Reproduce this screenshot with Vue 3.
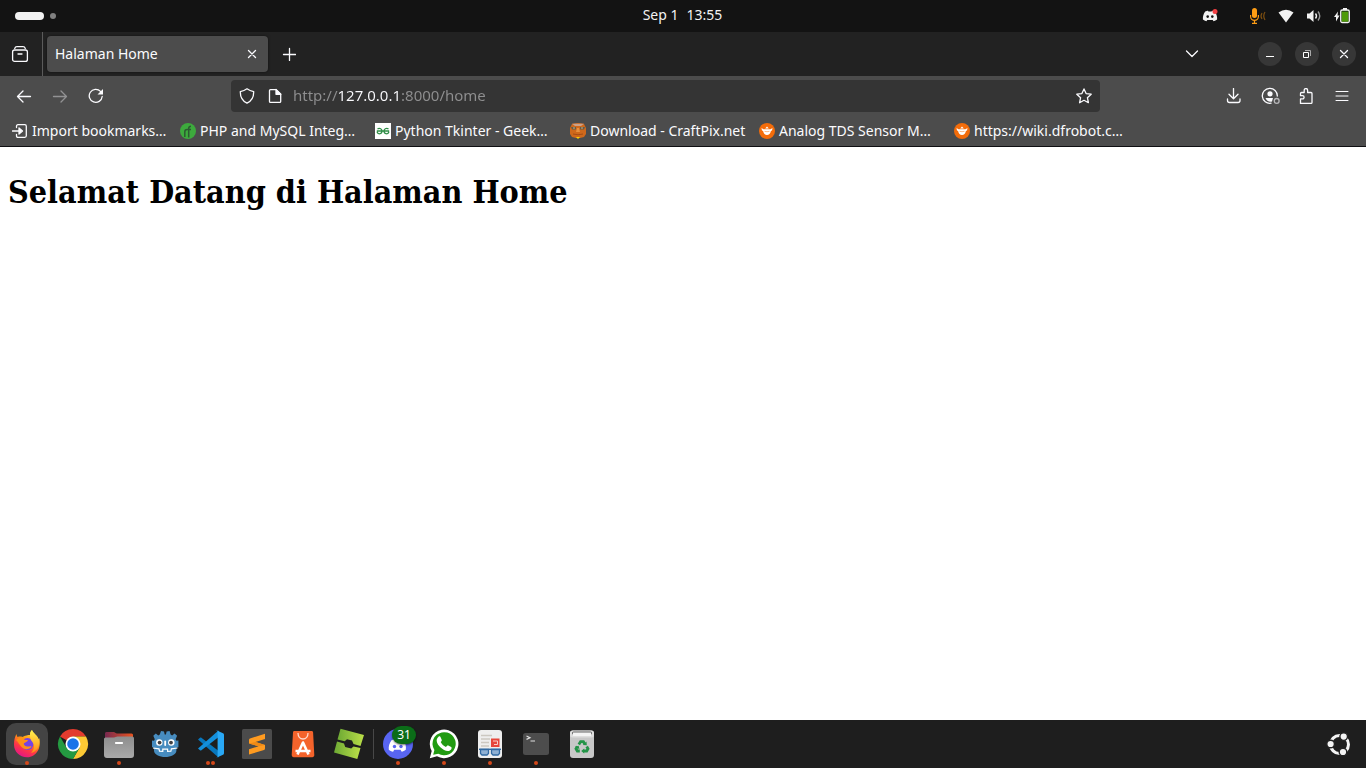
<script setup>
import { ref } from 'vue'

const address = ref('http://127.0.0.1:8000/home')

const bookmarks = [
  { id: 'import', label: 'Import bookmarks…', size: 'small' },
  { id: 'php', label: 'PHP and MySQL Integ…', size: 'large' },
  { id: 'geeks', label: 'Python Tkinter - Geek…', size: 'large' },
  { id: 'craftpix', label: 'Download - CraftPix.net', size: 'medium' },
  { id: 'dfrobot', label: 'Analog TDS Sensor M…', size: 'large' },
  { id: 'dfrobot', label: 'https://wiki.dfrobot.c…', size: 'large' }
]
</script>

<template>
  <div class="desktop">
    <header class="topbar">
      <button class="workspaces" aria-label="Activities"><span class="pill"></span><span class="dot"></span></button>
      <button class="clock"><span>Sep 1</span><span>13:55</span></button>
      <div class="status">
        <svg class="discord-tray" width="16" height="16" viewBox="0 0 16 16">
          <path d="M3.2 3.6C4.300 3 5.300 2.900 6 2.800l.4.8h3.200l.4-.8c.8.1 1.800.3 2.800.8 1.800 2.600 2.600 5.500 2.300 8-1 .9-2.200 1.400-3.500 1.700l-.9-1.300H5.300l-.9 1.300C3 13 1.900 12.500.9 11.600.7 8.700 1.500 6 3.200 3.600z" fill="#f2f2f2"/>
          <circle cx="5.700" cy="8.600" r="1.300" fill="#131313"/><circle cx="10.300" cy="8.600" r="1.300" fill="#131313"/>
          <circle cx="13" cy="3.500" r="2.500" fill="#f23f43"/>
        </svg>
        <svg width="16" height="16" viewBox="0 0 16 16" fill="none">
          <rect x="2" y="0" width="5" height="10" rx="2.500" fill="#ff9d14"/>
          <path d="M.6 7v1.500a3.900 3.900 0 0 0 7.800 0V7M4.500 12.500V15M2 15.300h5" stroke="#ff9d14" stroke-width="1.200"/>
          <path d="M12 5q-2 3 0 6M15 4q-2.500 4 0 8" stroke="#7d4f11" stroke-width="1.200"/>
        </svg>
        <svg width="16" height="16" viewBox="0 0 16 16"><path d="M.5 4.500Q8-1 15.500 4.500L8 14.500z" fill="#f2f2f2"/></svg>
        <svg width="16" height="16" viewBox="0 0 16 16" fill="none">
          <path d="M1 5.500h2.500L7.500 2v12l-4-3.500H1z" fill="#f2f2f2"/>
          <path d="M9.500 5.500q2 2.500 0 5" stroke="#f2f2f2" stroke-width="1.400"/><path d="M12 3.500q3.500 4.500 0 9" stroke="#999" stroke-width="1.400"/>
        </svg>
        <svg width="16" height="16" viewBox="0 0 16 16">
          <path d="M4 3.500 0 9h2v4.500L5.500 7.500h-2z" fill="#f2f2f2"/>
          <path d="M9 0h4v2H9z" fill="#f2f2f2"/><rect x="6.700" y="2" width="8.600" height="12.500" rx="1.500" fill="#2b4d10" stroke="#f2f2f2" stroke-width="1.300"/><rect x="8" y="4" width="6" height="9.500" fill="#4e9a06"/>
        </svg>
      </div>
    </header>

    <div class="tabs">
      <button class="view" aria-label="Recent browsing">
        <svg class="line" width="20" height="20" viewBox="0 0 20 20"><path d="M4.700 4.500C5.200 3 6 2.600 7 2.600h6c1 0 1.800.4 2.300 1.900M8 10h4"/><rect x="2.600" y="6" width="14.800" height="11.400" rx="2"/></svg>
      </button>
      <div class="tab">
        <span>Halaman Home</span>
        <button class="close" aria-label="Close tab"><svg class="line" width="10" height="10" viewBox="0 0 10 10"><path d="m1.500 1.500 7 7m0-7-7 7"/></svg></button>
      </div>
      <button class="new-tab" aria-label="New tab"><svg class="line" width="14" height="14" viewBox="0 0 14 14"><path d="M7.500 1.500v12M1.500 7.500h12"/></svg></button>
      <button class="list-tabs" aria-label="List all tabs"><svg class="line" width="14" height="14" viewBox="0 0 14 14"><path d="m1.500 4 5.500 5.500L12.500 4"/></svg></button>
      <div class="window-buttons">
        <button aria-label="Minimize"><svg width="12" height="12" viewBox="0 0 12 12"><path d="M2 8h8v1H2z" fill="#fff"/></svg></button>
        <button aria-label="Restore"><svg width="12" height="12" viewBox="0 0 12 12" fill="none"><path d="M4 2.500h5.500V8" stroke="#aaa"/><path d="M2.500 4.500h5v5h-5z" stroke="#fff"/></svg></button>
        <button aria-label="Close"><svg class="line" width="12" height="12" viewBox="0 0 12 12"><path d="m2.500 2.500 7 7m0-7-7 7"/></svg></button>
      </div>
    </div>

    <nav class="navbar">
      <button aria-label="Back"><svg class="line" width="16" height="16" viewBox="0 0 16 16"><path d="M14.500 8.500H1.500M7 3 1.500 8.500 7 14"/></svg></button>
      <button aria-label="Forward" disabled><svg class="line" width="16" height="16" viewBox="0 0 16 16"><path d="M1.500 8.500h13M9 3l5.500 5.500L9 14"/></svg></button>
      <button aria-label="Reload"><svg class="line" width="16" height="16" viewBox="0 0 16 16"><path d="M14.200 8.500A6.500 6.500 0 1 1 12.500 3.400"/><path d="M15 1v5.500H9.500z" fill="#fbfbfe" stroke="none"/></svg></button>
      <div class="urlbar">
        <svg class="line" width="16" height="16" viewBox="0 0 16 16"><path d="M8 .8c2 1.500 4 2.300 6.700 2.800.1 5-1.700 9.200-6.700 11.600C3 12.800 1.200 8.600 1.300 3.600 4 3.100 6 2.300 8 .8z"/></svg>
        <svg class="line" width="16" height="16" viewBox="0 0 16 16"><path d="M3.500 1.600H9l4.700 4.600v7.200c0 .7-.4 1-1 1H3.500c-.7 0-1-.4-1-1V2.600c0-.6.3-1 1-1z"/><path d="M9 1.500v4.800h4.800z" fill="#fbfbfe"/></svg>
        <input v-model="address" aria-label="Address" spellcheck="false" />
        <button aria-label="Bookmark this page"><svg class="line" width="16" height="16" viewBox="0 0 16 16"><path d="m8 .9 2.100 4.700 5.100.6-3.800 3.500 1 5L8 12.300l-4.400 2.400 1-5L.8 6.200l5.100-.6z"/></svg></button>
      </div>
      <button aria-label="Downloads"><svg class="line" width="16" height="16" viewBox="0 0 16 16"><path d="M7.500.5v10M3 6.200l4.500 4.500L12 6.200M1.500 11v1.500c0 1.300.8 2 2 2h8.500c1.200 0 2-.7 2-2V11"/></svg></button>
      <button aria-label="Account">
        <svg class="line" width="20" height="20" viewBox="0 0 20 20"><path d="M17.300 10A7.500 7.500 0 1 0 11 17.200"/><circle cx="10" cy="7.800" r="2.600" fill="#fbfbfe" stroke="none"/><path d="M5.500 12h7.500l-1 3.500c-3 .7-5.500-.7-6.500-3.500z" fill="#fbfbfe" stroke="none"/><circle cx="16.700" cy="14.900" r="2.400" stroke="#b7b7b9"/></svg>
      </button>
      <button aria-label="Extensions"><svg class="line" width="16" height="16" viewBox="0 0 16 16"><path d="M2.500 15.400v-4.500h2a1.500 1.500 0 0 0 0-3.200h-2V5.500c0-.6.400-1 1-1h2.700V2.200a1.700 1.700 0 0 1 3.400 0v2.300H13c.6 0 1 .4 1 1v8.900c0 .6-.4 1-1 1z"/></svg></button>
      <button aria-label="Menu"><svg class="line thin" width="16" height="16" viewBox="0 0 16 16"><path d="M2 3.500h12M2 8h12M2 12.500h12"/></svg></button>
    </nav>

    <div class="bookmarks">
      <a v-for="(b, i) in bookmarks" :key="i" href="#" :class="b.size">
        <svg width="16" height="16" viewBox="0 0 16 16">
          <g v-if="b.id === 'import'" class="line"><path d="M4.500 4.500V3.200c0-.9.500-1.500 1.500-1.500h6.800c1 0 1.500.6 1.500 1.500v9.600c0 1-.5 1.500-1.500 1.500H6c-1 0-1.500-.5-1.500-1.500v-1.300M.5 8h8"/><path d="m7 5 3.500 3L7 11z" fill="#fbfbfe"/></g>
          <g v-else-if="b.id === 'php'"><circle cx="8" cy="8" r="8" fill="#3daa3d"/><path d="M4.800 14V9c0-1.500.8-2.500 2.200-2.500M6.500 6.500h4.500M8.700 14.500V5.500c0-1.500.8-2.200 2.300-2.200" fill="none" stroke="#2d5a32" stroke-width="1.500"/></g>
          <g v-else-if="b.id === 'geeks'"><path d="M0 0h16v16H0z" fill="#fff"/><path d="M1.800 8h12.400M2.500 5.800C5 4.800 7 6 7 8c0 3-4 4-5 .8M13.500 5.800C11 4.800 9 6 9 8c0 3 4 4 5 .8" fill="none" stroke="#2f8d46" stroke-width="1.300"/></g>
          <g v-else-if="b.id === 'craftpix'"><path d="M2 1q6-2 12 0l2 4v6l-2 3-4 1H6l-4-1-2-3V5z" fill="#cf681b"/><path d="M2 .8h12L11 3H5z" fill="#c9a18a"/><path d="M1 4h5v2.500H2zm9 0h5l-1 2.500h-4z" fill="#625b4c"/><path d="M3 5h2m6 0h2" stroke="#c9b37c"/><path d="M7 5h2l1 4H6z" fill="#e8903e"/><path d="M3 11q5 1.500 10 0" fill="none" stroke="#a44c14"/><path d="m6 14 2 2 2-2z" fill="#ffd000"/></g>
          <g v-else><circle cx="8" cy="8" r="8" fill="#f36c0a"/><path d="M4.500 6.200h7l2-1.200-.4 2.300-1.300 1c-.3 2.200-1.800 3.700-3.800 3.700s-3.500-1.500-3.800-3.700l-1.300-1L2.500 5zM6.200 5.500 8 3.500l1.800 2z" fill="#fff"/><path d="M5.500 8.300q2.500.8 5 0" fill="none" stroke="#f7a468" stroke-width=".8"/></g>
        </svg>
        <span>{{ b.label }}</span>
      </a>
    </div>

    <main class="page"><h1>Selamat Datang di Halaman Home</h1></main>

    <footer class="dock">
      <button class="active running" aria-label="Firefox">
        <svg width="32" height="32" viewBox="0 0 32 32">
          <defs>
            <linearGradient id="fx" x1=".8" y1="0" x2=".3" y2="1"><stop offset="0" stop-color="#fff44f"/><stop offset=".4" stop-color="#ff980e"/><stop offset=".7" stop-color="#ff3647"/><stop offset="1" stop-color="#e31587"/></linearGradient>
            <linearGradient id="fy" x1=".5" y1="0" x2=".5" y2="1"><stop offset="0" stop-color="#fff44f"/><stop offset="1" stop-color="#ff8a16"/></linearGradient>
          </defs>
          <path d="M5.500 6c.2 1.500.6 2.200 1.200 3 1.600-.6 3.400-.6 4.800 0C14 7.500 17 7 19 7c0-2.300.8-4 2-5 .5 3 5.500 5 6.500 9l.8-.8C30.500 19 26 29.200 16 29.200 8.500 29.200 3 23.800 3 16.500 3 12 4 8.500 5.500 6z" fill="url(#fx)"/>
          <circle cx="16.500" cy="16" r="6" fill="#7542e5"/>
          <path d="M19 7c0-2.300.8-4 2-5 .5 3 6 5 7 11 .8 6-3 11-8 12 3-3 4-7 2-10-1-2-3-3-3-8z" fill="url(#fy)"/>
          <path d="M5 12c3-3 7-3 8.500-.2 1.500.5 3 .2 3.500.5-.3 1.500-3 2.200-4 3-.7 1 .4 2.800 3 3.200 1.800.3 3-.8 4.500 0-1.500 2.500-5 3.600-8 2C8.500 18 8 14.500 5 12z" fill="#ff8f18"/>
        </svg>
      </button>
      <button aria-label="Chrome">
        <svg width="32" height="32" viewBox="0 0 32 32"><path d="M16 16 3 8.500A15 15 0 0 1 29 8.500H16z" fill="#e33b2e"/><path d="M29 8.500A15 15 0 0 1 16 31l6.500-11.200L16 8.500z" fill="#fcc934"/><path d="M3 8.500A15 15 0 0 0 16 31l6.500-11.300L16 23l-6.500-3.300z" fill="#249a41"/><circle cx="16" cy="16" r="7.500" fill="#fff"/><circle cx="16" cy="16" r="5.800" fill="#1a73e8"/></svg>
      </button>
      <button class="running" aria-label="Files">
        <svg width="32" height="32" viewBox="0 0 32 32"><defs><linearGradient id="fo"><stop stop-color="#77284f"/><stop offset="1" stop-color="#e95420"/></linearGradient><linearGradient id="fg" x2="0" y2="1"><stop stop-color="#8d8d8d"/><stop offset="1" stop-color="#aaa"/></linearGradient></defs><path d="M2 12V5.500C2 4.500 2.800 4 3.500 4h7c1.500 0 2 1.500 3.500 1.500h14.500c1 0 1.500.8 1.500 1.500v5z" fill="url(#fo)"/><path d="M3 9.500h8c1.500 0 2-1 3.500-1H29c1.300 0 2 .8 2 2V27a3 3 0 0 1-3 3H4a3 3 0 0 1-3-3V11c0-1 1-1.500 2-1.500z" fill="url(#fg)"/><rect x="12" y="14" width="8" height="2" rx=".7" fill="#fff"/></svg>
      </button>
      <button aria-label="Godot">
        <svg width="32" height="32" viewBox="0 0 32 32"><path d="m12 3 3 .5.700 3h1.200l.7-3 3-.5 1 3.600 1.500.8 2.500-2 2.500 2.300-1.500 3.500.8 1.500 2-.2v6.800l-2 .2v3c0 4-5.500 6.500-11.200 6.500S5 26.500 5 22.500v-3l-2-.2v-6.800l2 .2.800-1.500L4.300 7.700l2.500-2.300 2.500 2 1.500-.8z" fill="#478cbf"/><path d="m4 20 6 .8.500 2.300 3.300.2v-2.200h4.800v2.200l3.300-.2.500-2.300 6-.8" fill="none" stroke="#fff" stroke-width="1.200"/><circle cx="10.300" cy="14.500" r="3.200" fill="#fff"/><circle cx="22.300" cy="14.500" r="3.200" fill="#fff"/><circle cx="10.600" cy="14.600" r="1.900" fill="#414042"/><circle cx="22" cy="14.600" r="1.900" fill="#414042"/><path d="M16.200 13.500v3.500" stroke="#fff" stroke-width="1.800" stroke-linecap="round"/></svg>
      </button>
      <button class="running two" aria-label="Visual Studio Code">
        <svg width="32" height="32" viewBox="0 0 32 32"><path d="M3 11.500 5 9.700c.5-.4 1-.3 1.400 0L25 24l-1.500 5.500z" fill="#0877bd"/><path d="m3 20.500 2 1.800c.5.400 1 .3 1.400 0L25 8l-1.500-5.500z" fill="#138fdb"/><path d="m22.500 2.700 5.500 2.600c.6.300 1 .8 1 1.500v18.400c0 .7-.4 1.200-1 1.500l-5.500 2.600c-.6.300-1.200.1-1.600-.3.800.6 1.700.2 1.700-.8V3.800c0-1-1-1.400-1.700-.8.400-.4 1-.6 1.600-.3z" fill="#29a8f5"/></svg>
      </button>
      <button aria-label="Sublime Text">
        <svg width="32" height="32" viewBox="0 0 32 32"><rect x="1" y="1" width="30" height="30" rx="1.500" fill="#4b4b4b"/><path d="M24 5.700V11l-9.500 3L24 17v3.500c0 .8-.4 1.300-1 1.500L8 26.500v-5.200L17.500 18.200 8 15.500V12c0-.8.4-1.300 1-1.500z" fill="#ff9b20"/><path d="M14.500 14 24 17l-6.500 1.200L8 15.500z" fill="#f08a14"/></svg>
      </button>
      <button aria-label="App Center">
        <svg width="32" height="32" viewBox="0 0 32 32" fill="none"><path d="M7.500 3h17c1 0 1.500.5 1.600 1.500L27.300 27c0 1.300-.8 2.200-2 2.200H6.700c-1.200 0-2-1-2-2.200L6 4.500C6 3.500 6.500 3 7.500 3z" fill="#f4632b"/><path d="M11 5c0 3.500 2 6 5 6s5-2.500 5-6" stroke="#ffd9cb" stroke-width="1.300"/><path d="m10.500 26.500 5.500-12 5.500 12M8.500 23h15" stroke="#fff" stroke-width="2.600" stroke-linejoin="round"/></svg>
      </button>
      <button aria-label="Sober">
        <svg width="32" height="32" viewBox="0 0 32 32"><defs><linearGradient id="gr"><stop stop-color="#6da934"/><stop offset="1" stop-color="#bbdf48"/></linearGradient></defs><path d="M7.500.8 31 7l-3.500 11-7-2-1.500-3.500-5-1.300-2.300 2L4.500 11.500z" fill="url(#gr)"/><path d="m4 13.500 7 2 1.200 3.500 6 1.500 2.300-2L27.500 20l-3.200 11L1 24.500z" fill="url(#gr)"/></svg>
      </button>
      <span class="divider"></span>
      <button class="running" aria-label="Discord, 31 notifications">
        <svg width="32" height="32" viewBox="0 0 32 32"><circle cx="16" cy="16" r="15" fill="#5865f2"/><path d="M9.500 12.300c1.300-.6 2.500-.8 3.500-1l.7 1.200h3.600l.7-1.200c1.200.1 2.300.4 3.500 1 2 3 2.800 6 2.300 9.500-1.500 1.200-2.800 1.700-4.100 2l-1.200-2h-6.300l-1.100 2c-1.700-.4-3-1-4.300-2-.5-3.500.7-6.500 2.700-9.500z" fill="#fff"/><circle cx="12.500" cy="18.500" r="1.700" fill="#5865f2"/><circle cx="19" cy="18.500" r="1.700" fill="#5865f2"/></svg>
        <span class="badge">31</span>
      </button>
      <button class="running" aria-label="WhatsApp">
        <svg width="32" height="32" viewBox="0 0 32 32"><path d="M1.800 30.200 3.700 23A14.300 14.300 0 1 1 9 28.300z" fill="#fff"/><path d="m5.200 26.800 1.200-4.700a11.600 11.600 0 1 1 3.900 3.700z" fill="#219b12"/><path d="M10.500 8.800c.7-.7 1.700-.6 2 .1l1.300 3c.3.800-.9 1.700-1.100 2.200 1 2.300 2.900 4 5.200 5 .7-.3 1.500-2 2.300-1.700l3 1.500c.6.400.4 1.300.2 2-.5 1.300-2.400 2.200-3.700 2.100-4.700-.4-10.500-5.500-11-10-.2-1.500.5-3 1.800-4.200z" fill="#fff"/></svg>
      </button>
      <button class="running" aria-label="Document Viewer">
        <svg width="32" height="32" viewBox="0 0 32 32" fill="none"><rect x="4" y="2" width="24" height="28" rx="3" fill="#eee"/><path d="M7 7.500h11M7 11h9M7 14.500h8M7 18h8" stroke="#ccc8c1" stroke-width="1.600"/><rect x="17" y="10.500" width="8.500" height="8.500" fill="#e6463b"/><path d="M19 13h4.500v3.500H20" stroke="#f9cdc9"/><path d="M6.500 21.500h8v4l-1.500 1.500H8l-1.500-1.500zm11 0h8v4L24 27h-5l-1.500-1.500z" fill="#8fb0d3" stroke="#326aa3" stroke-width="1.300"/><path d="M5 21.300h22" stroke="#326aa3" stroke-width="1.400"/></svg>
      </button>
      <button class="running" aria-label="Terminal">
        <svg width="32" height="32" viewBox="0 0 32 32" fill="none"><rect x="3" y="5" width="26" height="22" rx="2.500" fill="#4d4d4d"/><path d="m6.500 8 3.500 1.700-3.500 1.700M10.500 13h4.500" stroke="#e0e0e0" stroke-width="1.200"/></svg>
      </button>
      <button aria-label="Trash">
        <svg width="32" height="32" viewBox="0 0 32 32" fill="none"><rect x="4" y="2.500" width="24" height="27.500" rx="3" fill="#c8c8c8"/><rect x="4" y="2.500" width="24" height="7" rx="2.500" fill="#dedede"/><rect x="6" y="3.500" width="20" height="3" rx="1.500" fill="#666"/><path d="M7 4.500h18V8H7z" fill="#f4f4f4"/><g stroke="#239447" stroke-width="2.800"><path d="m12.800 16.500 1.800-2.800h2.800l1.400 2.300M20.700 18.500l1.300 2.200-1.300 2.300H17.500M13.800 23h-2.500l-1.300-2.300 1.300-2.200"/></g><path d="m16.800 17 4 .3-.3-3.800zM18.200 20.500v5l-3-2.500zM9 18.700l3.600-1 .9 3.600z" fill="#239447"/></svg>
      </button>
      <button class="apps" aria-label="Show Apps">
        <svg width="32" height="32" viewBox="0 0 32 32"><circle cx="16.500" cy="16.500" r="9" fill="none" stroke="#f4f4f4" stroke-width="3"/><g fill="#f4f4f4" stroke="#222" stroke-width="1.400"><circle cx="7.600" cy="16" r="3.800"/><circle cx="20.700" cy="8.600" r="3.800"/><circle cx="20" cy="24" r="3.800"/></g></svg>
      </button>
    </footer>
  </div>
</template>

<style>
body {
  margin: 0;
}
</style>

<style scoped>
.desktop {
  display: flex;
  flex-direction: column;
  min-height: 100vh;
  background: #fff;
  color: #fbfbfe;
  font-family: "Noto Sans", sans-serif;
  font-size: 14px;
  line-height: 20px;
}
svg {
  display: block;
  flex: none;
}
.line {
  fill: none;
  stroke: #fbfbfe;
  stroke-width: 1.3;
  stroke-linecap: round;
  stroke-linejoin: round;
}
.thin {
  stroke-width: 1;
}
button {
  display: flex;
  align-items: center;
  justify-content: center;
  margin: 0;
  padding: 0;
  border: 0;
  background: none;
  color: inherit;
  font: inherit;
}
.topbar {
  display: grid;
  grid-template-columns: 1fr auto 1fr;
  align-items: center;
  height: 32px;
  padding: 0 16px 0 15px;
  background: #131313;
}
.workspaces {
  justify-self: start;
  gap: 6px;
}
.pill {
  width: 29px;
  height: 8px;
  border-radius: 4px;
  background: #f2f2f2;
}
.dot {
  width: 6px;
  height: 6px;
  border-radius: 50%;
  background: #808080;
}
.clock {
  gap: 8px;
  padding-bottom: 2px;
  color: #f2f2f2;
}
.status {
  display: flex;
  justify-content: flex-end;
  gap: 12px;
}
.discord-tray {
  margin-right: 20px;
}
.tabs {
  display: flex;
  align-items: center;
  height: 44px;
  padding-right: 10px;
  background: #222;
}
.view {
  width: 43px;
  height: 44px;
  padding-right: 3px;
  border-right: 1px solid #5b5b5b;
  box-sizing: border-box;
}
.tab {
  display: flex;
  align-items: center;
  justify-content: space-between;
  box-sizing: border-box;
  width: 221px;
  height: 36px;
  margin-left: 4px;
  padding: 0 4px 0 8px;
  border-radius: 4px;
  background: #4c4c4c;
  box-shadow: 0 0 3px #0008;
}
.close {
  width: 24px;
  height: 24px;
}
.new-tab,
.list-tabs {
  width: 36px;
  height: 36px;
  margin-left: 3px;
}
.list-tabs {
  margin-left: auto;
}
.window-buttons {
  display: flex;
  gap: 13px;
  margin-left: 48px;
}
.window-buttons button {
  width: 24px;
  height: 24px;
  border-radius: 50%;
  background: #373737;
}
.navbar {
  display: flex;
  align-items: center;
  height: 40px;
  padding: 0 6px;
  background: #4c4c4c;
}
.navbar > button {
  flex: none;
  width: 36px;
  height: 36px;
}
.navbar > button:disabled {
  opacity: 0.4;
}
.urlbar {
  display: flex;
  flex: 1;
  align-items: center;
  gap: 12px;
  height: 32px;
  min-width: 0;
  margin: 0 116px 0 117px;
  padding: 0 8px;
  border-radius: 4px;
  background: #343434;
  box-sizing: border-box;
}
.urlbar input {
  flex: 1;
  min-width: 0;
  height: 24px;
  margin-left: -2px;
  padding: 0 0 2px;
  border: 0;
  outline: 0;
  box-sizing: border-box;
  font: inherit;
  font-size: 15px;
  color: transparent;
  background: linear-gradient(90deg, #8f8f90 45px, #fbfbfe 45px 108px, #8f8f90 108px);
  -webkit-background-clip: text;
  background-clip: text;
}
.bookmarks {
  display: flex;
  align-items: center;
  height: 30px;
  padding-left: 12px;
  border-bottom: 1px solid #0f0f12;
  background: #4c4c4c;
}
.bookmarks a {
  display: flex;
  align-items: center;
  gap: 4px;
  color: inherit;
  text-decoration: none;
  white-space: nowrap;
}
.small {
  width: 168px;
}
.medium {
  width: 189px;
}
.large {
  width: 195px;
}
.page {
  flex: 1;
  padding: 0 8px;
  color: #000;
}
.page h1 {
  margin: 23px 0;
  font: bold 32px/44px "DejaVu Serif Condensed", "DejaVu Serif", serif;
}
.dock {
  display: flex;
  align-items: center;
  gap: 4px;
  height: 48px;
  padding: 0 6px;
  background: #1e1e1e;
}
.dock button {
  position: relative;
  flex: none;
  width: 42px;
  height: 42px;
  border-radius: 10px;
}
.dock .active {
  background: #444;
}
.running::after {
  content: "";
  position: absolute;
  bottom: 0;
  left: 19px;
  width: 4px;
  height: 4px;
  border-radius: 50%;
  background: #d4481a;
}
.two::after {
  left: 16px;
  box-shadow: 5px 0 #d4481a;
}
.divider {
  width: 1px;
  height: 30px;
  margin: 0 -1px;
  background: #484848;
}
.badge {
  position: absolute;
  top: 3px;
  left: 15px;
  width: 24px;
  height: 18px;
  border-radius: 9px;
  background: #0b6c18;
  box-shadow: 0 1px 2px #0008;
  font-size: 12px;
  line-height: 18px;
}
.dock .apps {
  margin-left: auto;
}
</style>
